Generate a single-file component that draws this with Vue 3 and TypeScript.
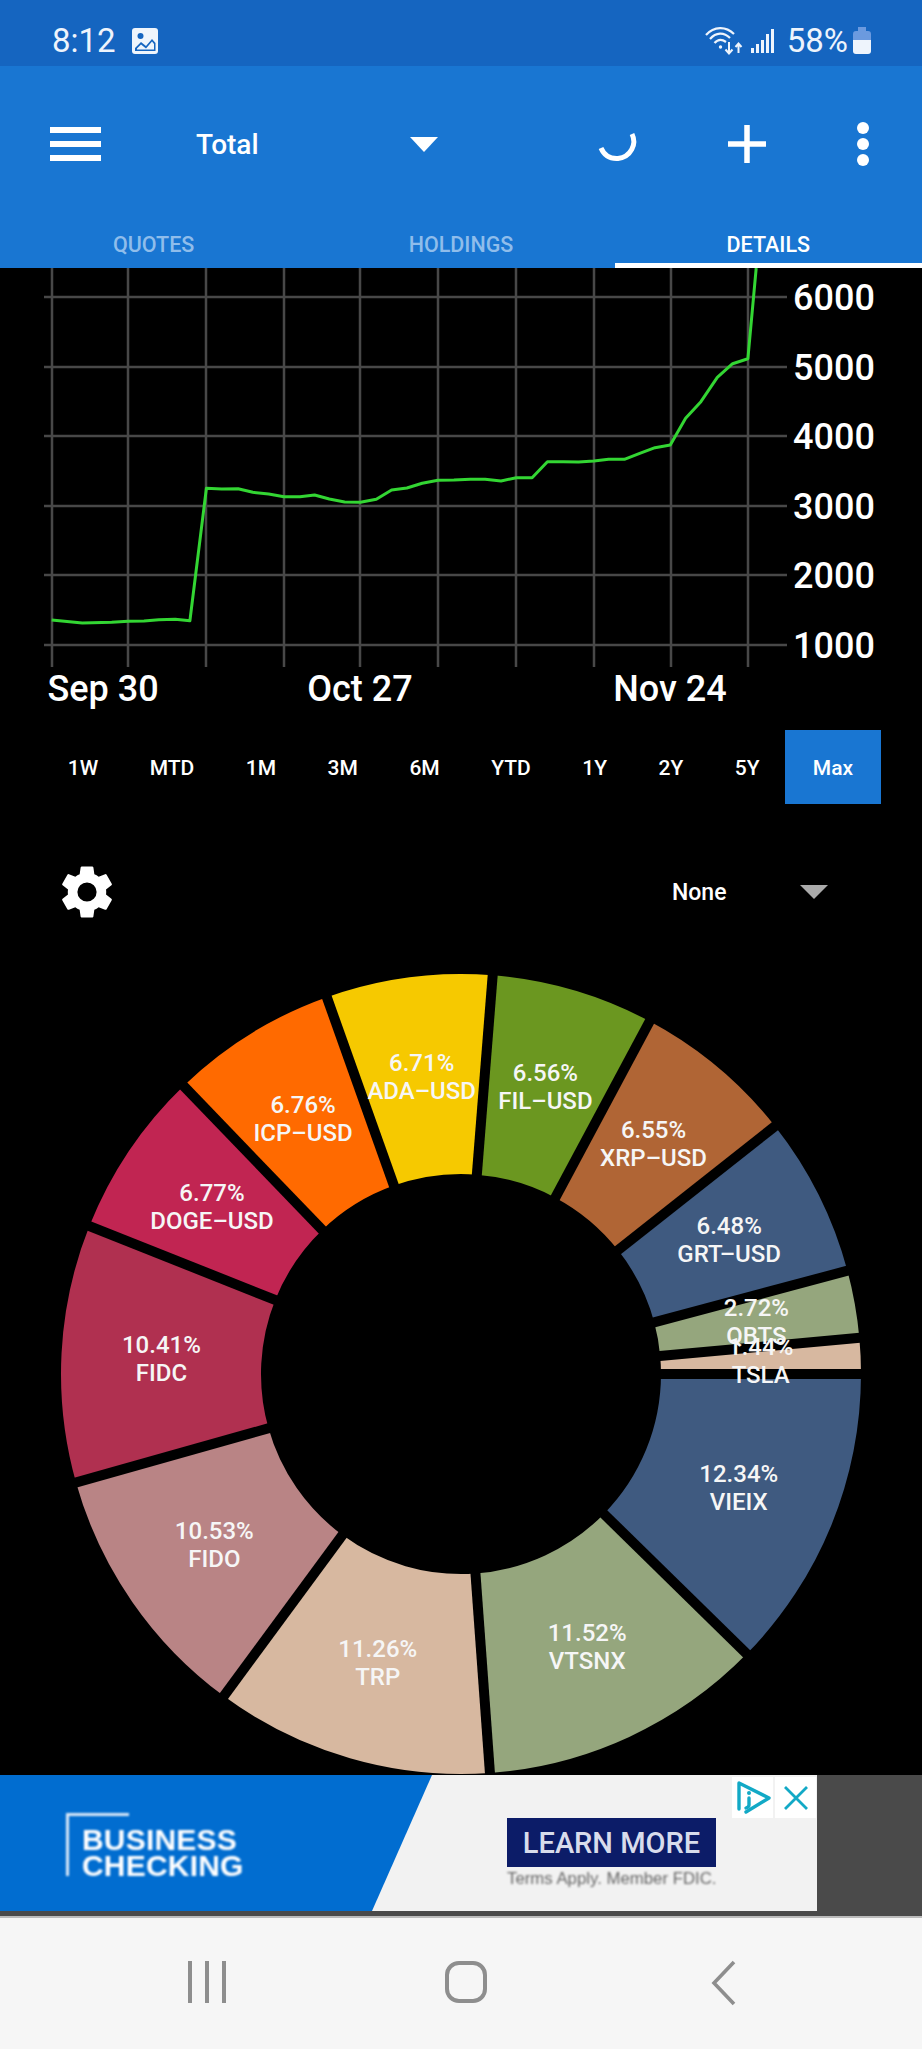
<script setup lang="ts">

import { computed } from 'vue'

const tabs = [
    { label: 'QUOTES', active: false },
    { label: 'HOLDINGS', active: false },
    { label: 'DETAILS', active: true },
]

const ranges = ['1W', 'MTD', '1M', '3M', '6M', 'YTD', '1Y', '2Y', '5Y', 'Max']

const gridX = [52, 128, 206, 284, 360, 438, 516, 594, 671, 748]

const gridY = [
    { y: 297, label: '6000' },
    { y: 367, label: '5000' },
    { y: 436, label: '4000' },
    { y: 506, label: '3000' },
    { y: 575, label: '2000' },
    { y: 645, label: '1000' },
]

const dates = [
    { x: 103, label: 'Sep 30' },
    { x: 360, label: 'Oct 27' },
    { x: 670, label: 'Nov 24' },
]

const linePoints = [
    [51.7, 620], [82.3, 623], [111.7, 622.3], [128.2, 621.3], [144, 621], [158.8, 619.7], [175.2, 619.3], [189.9, 620.7],
    [206.4, 488.3], [221.7, 489], [238.1, 488.7], [252.8, 492.3], [268.7, 494], [284, 496.7], [299.9, 496.7], [314.6, 495],
    [329.3, 499], [344.6, 502], [360.4, 502.3], [376.3, 499.3], [391.6, 490], [406.9, 488], [422.2, 483.3], [438, 480.3],
    [453.9, 480], [470.4, 479.3], [485.1, 479.3], [501, 481], [516.3, 477.7], [532.1, 477.7], [547.4, 461.7], [563.3, 461.7],
    [578.6, 462], [593.9, 461], [608.6, 459.3], [624.4, 459.3], [639.7, 453.3], [655, 447.7], [670.3, 445], [685.6, 418.3],
    [700.9, 401.7], [717.3, 377.3], [732.6, 363.7], [747.9, 358.7], [756.2, 268],
].map((p) => p.join(',')).join(' ')

const holdings = [
    { name: 'VIEIX', pct: 12.34, color: '#3f5a80' },
    { name: 'VTSNX', pct: 11.52, color: '#95a67d' },
    { name: 'TRP', pct: 11.26, color: '#d7b8a0' },
    { name: 'FIDO', pct: 10.53, color: '#b98485' },
    { name: 'FIDC', pct: 10.41, color: '#b03050' },
    { name: 'DOGE–USD', pct: 6.77, color: '#c12552' },
    { name: 'ICP–USD', pct: 6.76, color: '#ff6a00' },
    { name: 'ADA–USD', pct: 6.71, color: '#f6c900' },
    { name: 'FIL–USD', pct: 6.56, color: '#6b9720' },
    { name: 'XRP–USD', pct: 6.55, color: '#b06535' },
    { name: 'GRT–USD', pct: 6.48, color: '#3f5a80' },
    { name: 'QBTS', pct: 2.72, color: '#95a67d' },
    { name: 'TSLA', pct: 1.44, color: '#d7b8a0' },
]

const CX = 461
const CY = 1374
const OUTER = 400
const INNER = 200
const LABEL_R = 300

function polar(r: number, deg: number) {
    const a = (deg * Math.PI) / 180
    return { x: CX + r * Math.cos(a), y: CY + r * Math.sin(a) }
}

// slices run clockwise from 3 o'clock
const slices = computed(() => {
    const total = holdings.reduce((sum, h) => sum + h.pct, 0)
    let start = 0
    return holdings.map((h) => {
        const sweep = (h.pct / total) * 360
        const end = start + sweep
        const large = sweep > 180 ? 1 : 0
        const a = polar(OUTER, start)
        const b = polar(OUTER, end)
        const c = polar(INNER, end)
        const d = polar(INNER, start)
        const label = polar(LABEL_R, start + sweep / 2)
        const gapFrom = polar(INNER - 6, start)
        const gapTo = polar(OUTER + 6, start)
        start = end
        return {
            ...h,
            path: `M${a.x} ${a.y}A${OUTER} ${OUTER} 0 ${large} 1 ${b.x} ${b.y}L${c.x} ${c.y}A${INNER} ${INNER} 0 ${large} 0 ${d.x} ${d.y}Z`,
            label,
            gapFrom,
            gapTo,
        }
    })
})

</script>

<template>

    <div id="wrapper">

        <!-- android status bar -->
        <div class="status-bar">
            <span class="status-text">8:12</span>
            <svg class="status-image" width="26" height="26" viewBox="0 0 26 26">
                <rect width="26" height="26" rx="3" fill="#eff5fc" />
                <circle cx="8.5" cy="8" r="3" fill="#1565c0" />
                <path d="M3 23V20L9 14L14 18L20 11L23.5 15V23Z" fill="#1565c0" />
                <path d="M5 21.5V20.5L9 16.5L14 20.5L20 13.5L22 16V21.5Z" fill="#eff5fc" />
            </svg>
            <div class="status-right">
                <svg width="38" height="30" viewBox="0 0 38 30" fill="none" stroke="#eef4fc" stroke-width="2.2">
                    <path d="M1 9C9 0 21 0 29 8" />
                    <path d="M5 13C11 6 19 6 25 12" />
                    <path d="M9.5 17C13 13 17 13 21 16" />
                    <circle cx="15.5" cy="21" r="1.7" fill="#eef4fc" stroke="none" />
                    <path d="M24 16V27M20.5 23.5L24 27.5L27.5 23.5" stroke-width="2" />
                    <path d="M33.5 27V18M30.5 21L33.5 17.5L36.5 21" stroke-width="2" />
                </svg>
                <svg class="status-signal" width="23" height="26" viewBox="0 0 23 26" fill="#eef4fc">
                    <rect x="0" y="20" width="3" height="5" />
                    <rect x="5" y="16" width="3" height="9" />
                    <rect x="10" y="12" width="3" height="13" />
                    <rect x="15" y="6" width="3" height="19" />
                    <rect x="20" y="1" width="3" height="24" />
                </svg>
                <span class="status-text status-pct">58%</span>
                <svg class="status-battery" width="18" height="27" viewBox="0 0 18 27">
                    <path d="M5 0H13V4H15Q18 4 18 7V13H0V7Q0 4 3 4H5Z" fill="#6b9adf" />
                    <path d="M0 13H18V24Q18 27 15 27H3Q0 27 0 24Z" fill="#eef4fc" />
                </svg>
            </div>
        </div>

        <!-- app bar -->
        <div class="app-bar">
            <div class="toolbar">
                <div class="hamburger">
                    <span></span><span></span><span></span>
                </div>
                <span class="title">Total</span>
                <div class="title-arrow"></div>
                <svg class="spinner" width="44" height="36" viewBox="0 0 44 36" fill="none">
                    <path d="M36 3C41 13 35 26 22 27.5C14 28 8 24 5 17" stroke="#fff" stroke-width="5" />
                </svg>
                <svg class="plus" width="40" height="40" viewBox="0 0 40 40">
                    <path d="M20 1V39M1 20H39" stroke="#fff" stroke-width="5.5" />
                </svg>
                <div class="dots">
                    <span></span><span></span><span></span>
                </div>
            </div>
            <div class="tabs">
                <div class="tab" :class="{ 'tab-active': tab.active }" v-for="tab in tabs">
                    {{ tab.label }}
                </div>
            </div>
        </div>

        <!-- value chart -->
        <svg class="chart" width="922" height="462" viewBox="0 268 922 462">
            <line v-for="x in gridX" :x1="x" :x2="x" y1="268" y2="667" class="grid-line" />
            <line v-for="row in gridY" x1="44" x2="787" :y1="row.y" :y2="row.y" class="grid-line" />
            <polyline :points="linePoints" class="value-line" />
            <text v-for="row in gridY" x="793" :y="row.y + 13" class="axis-text">{{ row.label }}</text>
            <text v-for="d in dates" :x="d.x" y="701" text-anchor="middle" class="axis-text">{{ d.label }}</text>
        </svg>

        <!-- range buttons -->
        <div class="ranges">
            <div class="range" :class="{ 'range-active': r == 'Max' }" v-for="r in ranges">{{ r }}</div>
        </div>

        <!-- allocation options -->
        <div class="options">
            <svg width="64" height="64" viewBox="0 0 24 24" fill="#fff">
                <path d="M19.14 12.94c.04-.3.06-.61.06-.94 0-.32-.02-.64-.07-.94l2.03-1.58a.49.49 0 0 0 .12-.61l-1.92-3.32a.49.49 0 0 0-.59-.22l-2.39.96a7 7 0 0 0-1.62-.94l-.36-2.54a.48.48 0 0 0-.48-.41h-3.84a.48.48 0 0 0-.47.41l-.36 2.54c-.59.24-1.13.57-1.62.94l-2.39-.96a.49.49 0 0 0-.59.22L2.74 8.87a.48.48 0 0 0 .12.61l2.03 1.58c-.05.3-.09.63-.09.94s.02.64.07.94l-2.03 1.58a.49.49 0 0 0-.12.61l1.92 3.32c.12.22.37.29.59.22l2.39-.96c.5.38 1.03.7 1.62.94l.36 2.54c.05.24.24.41.48.41h3.84c.24 0 .44-.17.47-.41l.36-2.54c.59-.24 1.13-.56 1.62-.94l2.39.96c.22.08.47 0 .59-.22l1.92-3.32a.48.48 0 0 0-.12-.61zM12 15.6A3.6 3.6 0 1 1 12 8.4a3.6 3.6 0 0 1 0 7.2z" />
            </svg>
            <span class="none-label">None</span>
            <div class="none-arrow"></div>
        </div>

        <!-- allocation donut -->
        <svg class="donut" width="922" height="815" viewBox="0 960 922 815">
            <path v-for="s in slices" :d="s.path" :fill="s.color" />
            <line v-for="s in slices" :x1="s.gapFrom.x" :y1="s.gapFrom.y" :x2="s.gapTo.x" :y2="s.gapTo.y" class="slice-gap" />
            <g v-for="s in slices" class="slice-label">
                <text :x="s.label.x" :y="s.label.y - 5.5" text-anchor="middle">{{ s.pct.toFixed(2) }}%</text>
                <text :x="s.label.x" :y="s.label.y + 22.5" text-anchor="middle">{{ s.name }}</text>
            </g>
        </svg>

        <!-- ad banner -->
        <div class="ad-wrap">
            <div class="ad">
                <div class="ad-blue">
                    <div class="ad-frame">BUSINESS<br>CHECKING</div>
                </div>
                <div class="ad-cta">
                    <div class="ad-button">LEARN MORE</div>
                    <div class="ad-terms">Terms Apply. Member FDIC.</div>
                </div>
                <div class="ad-corner">
                    <div class="ad-corner-box">
                        <svg width="36" height="36" viewBox="0 0 36 36" fill="none" stroke="#12a9c6" stroke-width="3.4">
                            <path d="M4 29V3L34 18L11 32" stroke-linejoin="round" stroke-linecap="round" />
                            <path d="M14 18V25Q14 27 11 28" stroke-linecap="round" />
                            <circle cx="14" cy="13" r="2" fill="#12a9c6" stroke="none" />
                        </svg>
                    </div>
                    <div class="ad-corner-box">
                        <svg width="24" height="24" viewBox="0 0 24 24" stroke="#12a9c6" stroke-width="2.8">
                            <path d="M1 1L23 23M23 1L1 23" />
                        </svg>
                    </div>
                </div>
            </div>
        </div>

        <!-- android nav bar -->
        <div class="nav-bar">
            <svg width="40" height="44" viewBox="0 0 40 44" stroke="#8e8e8e" stroke-width="4">
                <path d="M3 1V43M20 1V43M37 1V43" />
            </svg>
            <svg width="44" height="44" viewBox="0 0 44 44" fill="none" stroke="#8e8e8e" stroke-width="4">
                <rect x="3" y="3" width="38" height="38" rx="12" />
            </svg>
            <svg width="26" height="46" viewBox="0 0 26 46" fill="none" stroke="#8e8e8e" stroke-width="3.6">
                <path d="M23 2L3 23L23 44" />
            </svg>
        </div>

    </div>

</template>

<style>
html,
body {
    margin: 0;
    background: #000;
}
</style>

<style scoped>
#wrapper {
    width: 922px;
    height: 2049px;
    overflow: hidden;
    display: flex;
    flex-direction: column;
    background-color: #000;
    color: #fff;
    font-family: Roboto, "Liberation Sans", sans-serif;
}

svg {
    display: block;
    flex: none;
}

.status-bar {
    height: 66px;
    flex: none;
    display: flex;
    align-items: center;
    padding: 15px 51px 0 52px;
    box-sizing: border-box;
    background-color: #1565c0;
}

.status-text {
    font-size: 33px;
    line-height: 32px;
    color: #eef4fc;
}

.status-image {
    margin-left: 16px;
}

.status-right {
    margin-left: auto;
    display: flex;
    align-items: center;
}

.status-signal {
    margin-left: 8px;
}

.status-pct {
    margin-left: 13px;
}

.status-battery {
    margin-left: 5px;
}

.app-bar {
    height: 202px;
    flex: none;
    background-color: #1976d2;
    display: flex;
    flex-direction: column;
}

.toolbar {
    height: 156px;
    display: flex;
    align-items: center;
    padding-left: 50px;
}

.hamburger {
    width: 51px;
    display: flex;
    flex-direction: column;
    gap: 8px;
}

.hamburger span {
    display: block;
    height: 6px;
    background-color: #fff;
}

.title {
    margin-left: 95px;
    width: 63px;
    font-size: 28px;
    font-weight: 500;
}

.title-arrow {
    margin-left: 151px;
    width: 0;
    height: 0;
    border-left: 14px solid transparent;
    border-right: 14px solid transparent;
    border-top: 15px solid #fff;
}

.spinner {
    margin-left: 158px;
    margin-top: 10px;
}

.plus {
    margin-left: 87px;
}

.dots {
    margin-left: 90px;
    display: flex;
    flex-direction: column;
    gap: 4px;
}

.dots span {
    display: block;
    width: 12px;
    height: 12px;
    border-radius: 50%;
    background-color: #fff;
}

.tabs {
    height: 46px;
    display: flex;
}

.tab {
    flex: 1;
    display: flex;
    align-items: center;
    justify-content: center;
    padding-top: 3px;
    box-sizing: border-box;
    border-bottom: 5px solid transparent;
    font-size: 21.5px;
    font-weight: 500;
    color: #8fbdeb;
}

.tab-active {
    color: #fff;
    border-bottom-color: #fff;
}

.grid-line {
    stroke: #484848;
    stroke-width: 2.5;
}

.value-line {
    fill: none;
    stroke: #33d633;
    stroke-width: 3;
    stroke-linejoin: round;
}

.axis-text {
    font-size: 36px;
    font-weight: 500;
    fill: #fff;
}

.ranges {
    height: 74px;
    flex: none;
    display: flex;
    padding-left: 42px;
    font-weight: 500;
}

.range {
    padding: 2px 25.75px 0;
    display: flex;
    align-items: center;
    font-size: 21px;
}

.range-active {
    padding: 2px 27.5px 0;
    background-color: #1976d2;
}

.options {
    height: 156px;
    flex: none;
    box-sizing: border-box;
    padding: 20px 0 0 55px;
    display: flex;
    align-items: center;
}

.none-label {
    margin-left: 553px;
    font-size: 23px;
    font-weight: 500;
}

.none-arrow {
    margin-left: 73px;
    width: 0;
    height: 0;
    border-left: 14px solid transparent;
    border-right: 14px solid transparent;
    border-top: 14px solid #aaa;
}

.donut {
    flex: none;
}

.slice-gap {
    stroke: #000;
    stroke-width: 10;
}

.slice-label text {
    font-size: 24px;
    font-weight: 500;
    fill: #f6f6f6;
}

.ad-wrap {
    height: 143px;
    flex: none;
    background-color: #4a4a4a;
    border-bottom: 2px solid #bbb;
    box-sizing: border-box;
}

.ad {
    position: relative;
    width: 817px;
    height: 136px;
    display: flex;
    background-color: #f2f2f2;
}

.ad-blue {
    width: 432px;
    height: 100%;
    box-sizing: border-box;
    padding: 38px 0 0 66px;
    background-color: #016dd0;
    clip-path: polygon(0 0, 100% 0, 372px 100%, 0 100%);
}

.ad-frame {
    width: 63px;
    height: 63px;
    box-sizing: border-box;
    padding: 11px 0 0 13px;
    border-top: 3px solid #dbe9f8;
    border-left: 3px solid #dbe9f8;
    white-space: nowrap;
    font-family: "Liberation Sans", sans-serif;
    font-size: 30px;
    font-weight: 700;
    line-height: 26px;
    letter-spacing: 0.2px;
    filter: blur(0.8px);
}

.ad-cta {
    margin-left: 75px;
    padding-top: 43px;
    width: 209px;
}

.ad-button {
    height: 49px;
    display: flex;
    align-items: center;
    justify-content: center;
    background-color: #0c1c68;
    color: #d8dcec;
    font-size: 29px;
    font-weight: 500;
}

.ad-terms {
    margin-top: 2px;
    white-space: nowrap;
    color: #666;
    font-family: "Liberation Sans", sans-serif;
    font-size: 16.8px;
    filter: blur(0.8px);
}

.ad-corner {
    position: absolute;
    top: 2px;
    right: 1px;
    display: flex;
    gap: 2px;
}

.ad-corner-box {
    width: 41px;
    height: 41px;
    display: flex;
    align-items: center;
    justify-content: center;
    background-color: #fff;
}

.nav-bar {
    flex: 1;
    display: flex;
    align-items: flex-start;
    padding: 42px 0 0 187px;
    background-color: #f6f6f6;
}

.nav-bar svg:nth-child(2) {
    margin-left: 217px;
}

.nav-bar svg:nth-child(3) {
    margin-left: 223px;
}
</style>
